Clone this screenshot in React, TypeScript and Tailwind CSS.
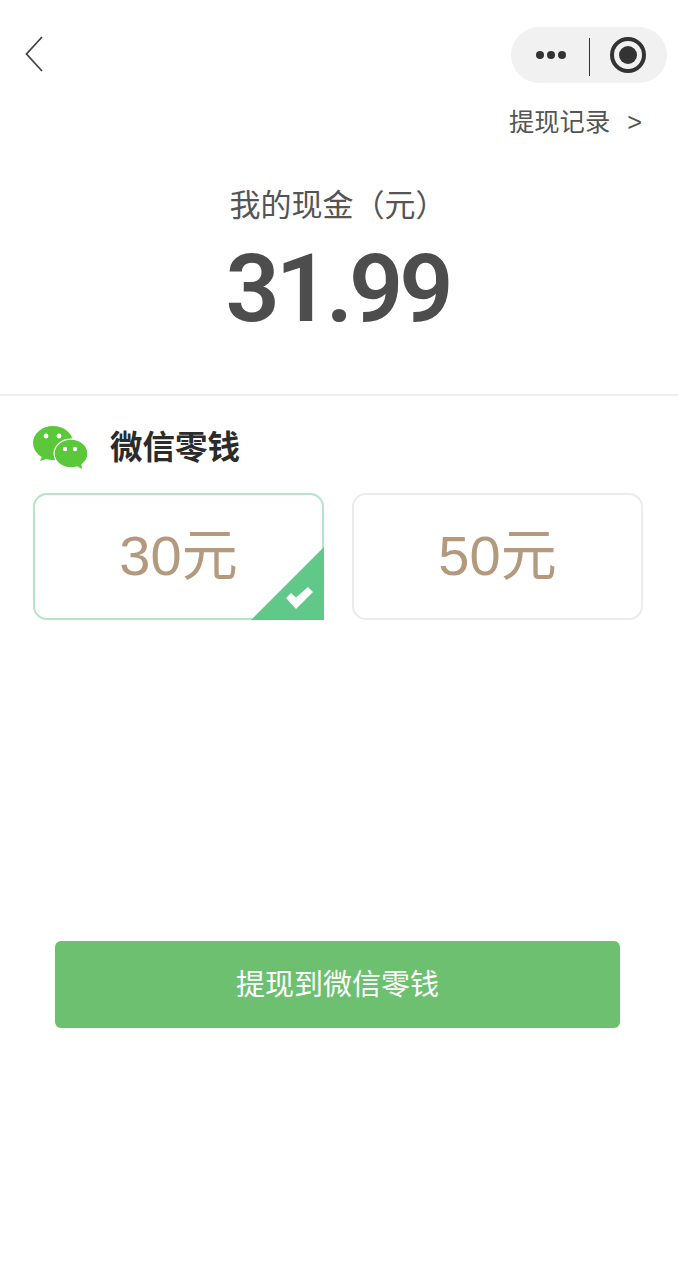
const FONT = "font-['Liberation_Sans','Noto_Sans_CJK_SC',sans-serif]";

const WechatLogo = () => (
  <svg width="56" height="46" viewBox="0 0 56 46" className="shrink-0">
    <ellipse cx="20" cy="17" rx="20" ry="17" fill="#5ac83a" />
    <path d="M10 28 L7 35 L17 32 Z" fill="#5ac83a" />
    <circle cx="13" cy="10" r="2.4" fill="#fff" />
    <circle cx="26" cy="10" r="2.4" fill="#fff" />
    <ellipse cx="38" cy="27.5" rx="17.5" ry="15" fill="#fff" />
    <ellipse cx="38" cy="27.5" rx="16.3" ry="13.8" fill="#5ac83a" />
    <path d="M42 39 L49 43 L48 35 Z" fill="#5ac83a" />
    <circle cx="32" cy="23" r="2.2" fill="#fff" />
    <circle cx="42" cy="23" r="2.2" fill="#fff" />
  </svg>
);

const Corner = () => (
  <svg
    width="73"
    height="73"
    viewBox="0 0 73 73"
    className="absolute right-[-2px] bottom-[-2px]"
  >
    <path d="M73 0 V73 H0 Z" fill="#60c888" />
    <path d="M35 51 L40 46 L45 50.5 L57 40 L62 45 L45 62 Z" fill="#fff" />
  </svg>
);

const App = () => {
  return (
    <div className={`${FONT} relative h-[1266px] w-[678px] overflow-hidden bg-white`}>
      <div className="flex h-[83px] items-end justify-between pr-[11px] pl-[25px]">
        <svg width="18" height="36" viewBox="0 0 18 36" className="mb-[11px]" fill="none">
          <path d="M17 1 L1.5 18 L17 35" stroke="#444" strokeWidth="1.8" />
        </svg>
        <div className="flex h-[56px] w-[156px] items-center rounded-full bg-[#f1f1f1]">
          <div className="flex w-[78px] justify-end gap-[3px] pr-[23px]">
            <span className="h-[8px] w-[8px] rounded-full bg-[#333]" />
            <span className="h-[8px] w-[8px] rounded-full bg-[#333]" />
            <span className="h-[8px] w-[8px] rounded-full bg-[#333]" />
          </div>
          <span className="mt-[4px] h-[38px] w-px bg-[#333]" />
          <span className="ml-[20px] flex h-[36px] w-[36px] items-center justify-center rounded-full border-[4px] border-[#333]">
            <span className="h-[18px] w-[18px] rounded-full bg-[#333]" />
          </span>
        </div>
      </div>

      <div className="mt-[23px] flex items-center justify-end pr-[36px] text-[25.3px] leading-[32px] text-[#555]">
        <span>提现记录</span>
        <span className="ml-[17px]">&gt;</span>
      </div>

      <div className="mt-[46px] pr-[2px] text-center text-[31px] leading-[44px] text-[#555]">
        我的现金（元）
      </div>
      <div className="mt-[11px] pr-[3px] text-center font-['Roboto',sans-serif] text-[95px] leading-[100px] font-semibold tracking-[-4px] text-[#4d4d4d]">
        31.99
      </div>

      <div className="mt-[55px] h-[2px] bg-[#eeeeee]" />

      <div className="mt-[30px] pr-[35px] pl-[33px]">
        <div className="flex items-center gap-[21px]">
          <WechatLogo />
          <span className="mb-[2px] text-[32.5px] leading-[44px] font-bold text-[#2b2b2b]">微信零钱</span>
        </div>
        <div className="mt-[21px] grid grid-cols-2 gap-[28px]">
          <div className="relative flex h-[127px] items-center justify-center rounded-[14px] border-2 border-[#b5e5c6] pb-[2px] text-[56px] text-[#b39a7e]">
            30元
            <Corner />
          </div>
          <div className="flex h-[127px] items-center justify-center rounded-[14px] border-2 border-[#ebebeb] pb-[2px] text-[56px] text-[#b39a7e]">
            50元
          </div>
        </div>
      </div>

      <div className="mt-[321px] mr-[58px] ml-[55px] flex h-[87px] items-center justify-center rounded-[6px] bg-[#6cc070] pt-[3px] text-[29px] text-white">
        提现到微信零钱
      </div>
    </div>
  );
};

export default App;
